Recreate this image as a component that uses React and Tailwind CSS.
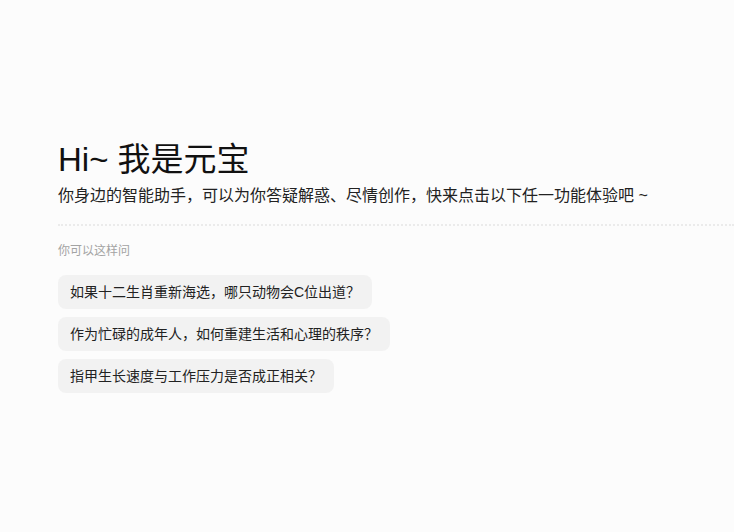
export default function App() {
  const qs = [
    "如果十二生肖重新海选，哪只动物会C位出道？",
    "作为忙碌的成年人，如何重建生活和心理的秩序？",
    "指甲生长速度与工作压力是否成正相关？",
  ];
  return (
    <div
      className="w-full min-h-screen bg-[#fcfcfc] pt-[140px] pl-[58px]"
      style={{ fontFamily: '"Liberation Sans", "Noto Sans CJK SC", sans-serif' }}
    >
      <h1 className="text-[33px] leading-[40px] text-[#111] font-normal">Hi~ 我是元宝</h1>
      <p className="mt-[4px] text-[16px] leading-[24px] text-[#222]">
        你身边的智能助手，可以为你答疑解惑、尽情创作，快来点击以下任一功能体验吧 ~
      </p>
      <div className="mt-[16px] border-t-2 border-dotted border-[#ebebeb]" />
      <div className="mt-[16px] text-[12px] leading-[18px] text-[#a3a3a3]">你可以这样问</div>
      <div className="mt-[15px] flex flex-col items-start gap-[8px]">
        {qs.map((q) => (
          <div
            key={q}
            className="h-[34px] flex items-center px-[12px] rounded-[8px] bg-[#f2f2f2] text-[14px] text-[#222]"
          >
            {q}
          </div>
        ))}
      </div>
    </div>
  );
}
